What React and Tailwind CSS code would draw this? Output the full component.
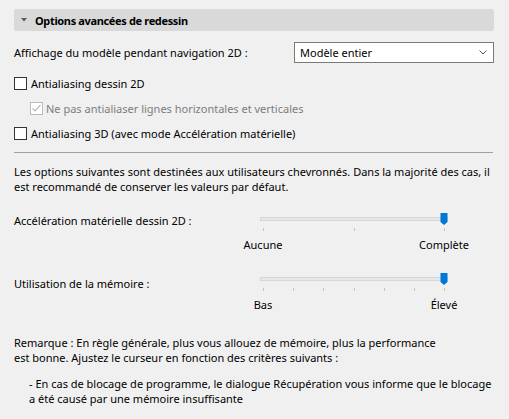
import React from 'react'

function Checkbox({ label, checked = false, disabled = false, indent = false }) {
  return (
    <div className={`flex items-center h-[13px] ${indent ? 'ml-[16px]' : ''}`}>
      <div
        className={`w-[13px] h-[13px] shrink-0 border bg-white flex items-center justify-center ${
          disabled ? 'border-[#bcbcbc]' : 'border-[#333333]'
        }`}
      >
        {checked && (
          <svg width="11" height="11" viewBox="0 0 11 11">
            <path d="M1.5 5.5 L4 8 L9.5 2" fill="none" stroke="#bcbcbc" strokeWidth="1.2" />
          </svg>
        )}
      </div>
      <span className={`${indent ? 'ml-[3px]' : 'ml-[4px]'} ${disabled ? 'text-[#7d7d7d]' : ''}`}>{label}</span>
    </div>
  )
}

function Slider({ ticks }) {
  return (
    <svg width="241" height="21" className="block">
      <rect x="27.5" y="6.5" width="187" height="3" fill="#e7e7e7" stroke="#d6d6d6" />
      {ticks.map((x) => (
        <line key={x} x1={x + 0.5} x2={x + 0.5} y1="17" y2="20" stroke="#c4c4c4" />
      ))}
      <path d="M207.5 2 H214.5 V11 L211 14 L207.5 11 Z" fill="#0078d7" />
    </svg>
  )
}

function SliderRow({ label, labelOffset, ticks, low, high }) {
  return (
    <div className="flex">
      <div className={`w-[219px] ${labelOffset}`}>{label}</div>
      <div className="w-[241px]">
        <Slider ticks={ticks} />
        <div className="flex justify-between mt-[6px]">
          <span className="w-[60px] text-center">{low}</span>
          <span className="w-[60px] text-center">{high}</span>
        </div>
      </div>
    </div>
  )
}

export default function App() {
  return (
    <div className="w-[509px] h-[419px] overflow-hidden bg-[#f0f0f0] pl-[14px] pr-[15px] pt-[9px] text-[11px] leading-[13px] text-black font-[family-name:'Noto_Sans',sans-serif]">
      {/* Section header */}
      <div className="h-[22px] rounded-[3px] bg-[#d9d9d9] flex items-center pl-[7px] gap-[8px]">
        <svg width="6" height="4" viewBox="0 0 6 4">
          <path d="M0 0 H6 L3 3.5 Z" fill="#5c5c5c" />
        </svg>
        <span className="font-bold tracking-[-0.35px]">Options avancées de redessin</span>
      </div>

      {/* Display mode */}
      <div className="mt-[11px] flex items-center justify-between">
        <span>Affichage du modèle pendant navigation 2D :</span>
        <div className="w-[200px] h-[21px] border border-[#7a7a7a] bg-white flex items-center justify-between pl-[5px] pr-[6px]">
          <span>Modèle entier</span>
          <svg width="8" height="5" viewBox="0 0 8 5">
            <path d="M0.5 0.5 L4 4 L7.5 0.5" fill="none" stroke="#555555" />
          </svg>
        </div>
      </div>

      {/* Checkboxes */}
      <div className="mt-[14px] flex flex-col gap-[12px]">
        <Checkbox label="Antialiasing dessin 2D" />
        <Checkbox label="Ne pas antialiaser lignes horizontales et verticales" checked disabled indent />
        <Checkbox label="Antialiasing 3D (avec mode Accélération matérielle)" />
      </div>

      <div className="mt-[12px] mr-[1px] h-px bg-[#a0a0a0]" />

      <p className="mt-[11px] leading-[15px] whitespace-nowrap">
        Les options suivantes sont destinées aux utilisateurs chevronnés. Dans la majorité des cas, il
        <br />
        est recommandé de conserver les valeurs par défaut.
      </p>

      {/* Sliders */}
      <div className="mt-[17px]">
        <SliderRow
          label="Accélération matérielle dessin 2D :"
          labelOffset="mt-[3px]"
          ticks={[30, 121, 211]}
          low="Aucune"
          high="Complète"
        />
      </div>
      <div className="mt-[20px]">
        <SliderRow
          label="Utilisation de la mémoire :"
          labelOffset="mt-[6px]"
          ticks={[30, 60, 90, 121, 151, 181, 211]}
          low="Bas"
          high="Élevé"
        />
      </div>

      {/* Notes */}
      <p className="mt-[24px] leading-[15px] whitespace-nowrap">
        Remarque : En règle générale, plus vous allouez de mémoire, plus la performance
        <br />
        est bonne. Ajustez le curseur en fonction des critères suivants :
      </p>
      <p className="mt-[11px] ml-[15px] leading-[15px] whitespace-nowrap">
        - En cas de blocage de programme, le dialogue Récupération vous informe que le blocage
        <br />
        a été causé par une mémoire insuffisante
      </p>
    </div>
  )
}
